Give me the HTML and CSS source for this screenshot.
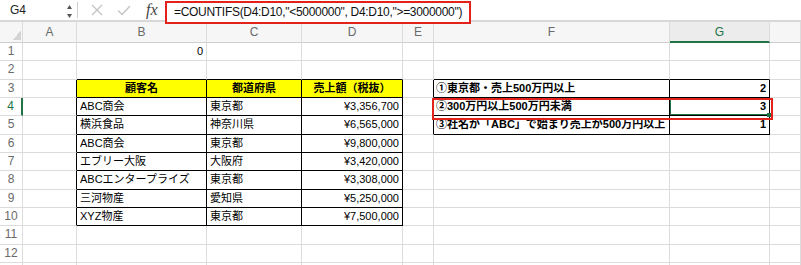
FILE: index.html
```html
<!DOCTYPE html>
<html lang="ja">
<head>
  <meta charset="UTF-8">
  <meta name="viewport" content="width=device-width, initial-scale=1.0">
  <title>COUNTIFS</title>
  <link rel="stylesheet" href="styles.css">
</head>
<body>
  <div class="formula-bar">
    <div class="name-box">G4</div>
    <div class="spin">
      <svg width="7" height="16" viewBox="0 0 7 16"><path d="M1 7 L3.5 3 L6 7 Z M1 12 L3.5 16 L6 12 Z" fill="#555"/></svg>
    </div>
    <div class="divider"></div>
    <div class="icon cancel">
      <svg width="12" height="12" viewBox="0 0 12 12"><path d="M1 1 L11 11 M11 1 L1 11" stroke="#c4c4c4" stroke-width="1.4" fill="none"/></svg>
    </div>
    <div class="icon enter">
      <svg width="14" height="11" viewBox="0 0 14 11"><path d="M1 5.5 L5 9.5 L13 1" stroke="#c4c4c4" stroke-width="1.4" fill="none"/></svg>
    </div>
    <div class="fx">fx</div>
    <div class="formula">=COUNTIFS(D4:D10,"&lt;5000000", D4:D10,"&gt;=3000000")</div>
  </div>

  <div class="sheet">
    <div class="row head">
      <div class="corner"></div>
      <div>A</div><div>B</div><div>C</div><div>D</div><div>E</div><div>F</div><div class="active">G</div><div></div>
    </div>

    <div class="row">
      <div class="rh">1</div>
      <div></div><div class="r">0</div><div></div><div></div><div></div><div></div><div></div><div></div>
    </div>
    <div class="row">
      <div class="rh">2</div>
      <div></div><div class="tt"></div><div class="tt"></div><div class="tt"></div><div></div><div class="tt"></div><div class="tt"></div><div></div>
    </div>
    <div class="row">
      <div class="rh">3</div>
      <div class="tl"></div>
      <div class="t hd">顧客名</div><div class="t hd">都道府県</div><div class="t hd">売上額（税抜）</div>
      <div class="tl"></div>
      <div class="t b">①東京都・売上500万円以上</div><div class="t b r">2</div>
      <div></div>
    </div>
    <div class="row">
      <div class="rh cur">4</div>
      <div class="tl"></div>
      <div class="t">ABC商会</div><div class="t">東京都</div><div class="t r">¥3,356,700</div>
      <div class="tl"></div>
      <div class="t b">②300万円以上500万円未満</div><div class="t b r selected">3</div>
      <div></div>
    </div>
    <div class="row">
      <div class="rh">5</div>
      <div class="tl"></div>
      <div class="t">横浜食品</div><div class="t">神奈川県</div><div class="t r">¥6,565,000</div>
      <div class="tl"></div>
      <div class="t b">③社名が「ABC」で始まり売上が500万円以上</div><div class="t b r">1</div>
      <div></div>
    </div>
    <div class="row">
      <div class="rh">6</div>
      <div class="tl"></div>
      <div class="t">ABC商会</div><div class="t">東京都</div><div class="t r">¥9,800,000</div>
      <div></div><div></div><div></div><div></div>
    </div>
    <div class="row">
      <div class="rh">7</div>
      <div class="tl"></div>
      <div class="t">エブリー大阪</div><div class="t">大阪府</div><div class="t r">¥3,420,000</div>
      <div></div><div></div><div></div><div></div>
    </div>
    <div class="row">
      <div class="rh">8</div>
      <div class="tl"></div>
      <div class="t">ABCエンタープライズ</div><div class="t">東京都</div><div class="t r">¥3,308,000</div>
      <div></div><div></div><div></div><div></div>
    </div>
    <div class="row">
      <div class="rh">9</div>
      <div class="tl"></div>
      <div class="t">三河物産</div><div class="t">愛知県</div><div class="t r">¥5,250,000</div>
      <div></div><div></div><div></div><div></div>
    </div>
    <div class="row">
      <div class="rh">10</div>
      <div class="tl"></div>
      <div class="t">XYZ物産</div><div class="t">東京都</div><div class="t r">¥7,500,000</div>
      <div></div><div></div><div></div><div></div>
    </div>
    <div class="row">
      <div class="rh">11</div>
      <div></div><div></div><div></div><div></div><div></div><div></div><div></div><div></div>
    </div>
    <div class="row">
      <div class="rh">12</div>
      <div></div><div></div><div></div><div></div><div></div><div></div><div></div><div></div>
    </div>
    <div class="row tail">
      <div class="rh"></div>
      <div></div><div></div><div></div><div></div><div></div><div></div><div></div><div></div>
    </div>

    <div class="highlight"></div>
  </div>
</body>
</html>
```

FILE: styles.css
```css
body {
  margin: 0;
  width: 801px;
  height: 265px;
  overflow: hidden;
  background-color: #fff;
  font-family: "Liberation Sans", "Noto Sans CJK JP", sans-serif;
  color: #000;
}

/* formula bar */
.formula-bar {
  display: flex;
  align-items: center;
  height: 20px;
  border-bottom: 2px solid #d8d8d8;
  background-color: #fff;
}
.name-box {
  width: 53px;
  padding-left: 10px;
  font-size: 12px;
  color: #222;
}
.spin {
  width: 13px;
  display: flex;
  justify-content: center;
}
.spin svg {
  display: block;
}
.divider {
  width: 1px;
  height: 16px;
  margin-left: 1px;
  background-color: #d0d0d0;
}
.icon {
  display: flex;
  justify-content: center;
}
.icon svg {
  display: block;
}
.cancel {
  width: 37px;
}
.enter {
  width: 18px;
}
.fx {
  width: 19px;
  padding-left: 13px;
  font-family: "Liberation Serif", serif;
  font-style: italic;
  font-size: 16px;
  color: #444;
}
.formula {
  position: relative;
  z-index: 2;
  align-self: flex-start;
  box-sizing: border-box;
  width: 306px;
  height: 23px;
  margin-top: 1px;
  padding-left: 7px;
  border: 2px solid #e3231b;
  font-size: 12px;
  line-height: 19px;
  letter-spacing: -0.3px;
  white-space: nowrap;
  color: #111;
  background-color: #fff;
}

/* sheet grid */
.sheet {
  position: relative;
}
.row {
  display: grid;
  grid-template-columns: 23px 54px 130px 95px 101px 31px 236px 100px 31px;
  height: 18.34px;
}
.row > div {
  box-sizing: border-box;
  border-right: 1px solid #dcdcdc;
  border-bottom: 1px solid #dcdcdc;
  padding: 0 3px;
  font-size: 11px;
  line-height: 17px;
  white-space: nowrap;
  overflow: hidden;
}
.row.tail {
  height: 6px;
}
.row.head {
  height: 21px;
}
.row.head > div {
  background-color: #f6f6f6;
  border-bottom-color: #cfcfcf;
  text-align: center;
  font-size: 12px;
  line-height: 20px;
  color: #6a6a6a;
}
.row.head > .active {
  color: #217346;
  border-bottom: 2px solid #217346;
  background-color: #ececec;
}
.corner {
  position: relative;
}
.corner::after {
  content: "";
  position: absolute;
  right: 1px;
  bottom: 2px;
  width: 8px;
  height: 10px;
  background: linear-gradient(to bottom right, transparent 50%, #d4d4d4 50%);
}
.row > .rh {
  padding: 0;
  text-align: center;
  font-size: 12px;
  color: #6a6a6a;
}
.row > .rh.cur {
  color: #217346;
  border-right: 2px solid #217346;
}

/* cell formats */
.r {
  text-align: right;
}
.b {
  font-weight: bold;
}
.row > .tt {
  border-bottom-color: #000;
}
.row > .tl {
  border-right-color: #000;
}
.row > .t {
  border-right-color: #000;
  border-bottom-color: #000;
}
.row > .hd {
  background-color: #ffff00;
  font-weight: bold;
  text-align: center;
}
.row > .b {
  padding: 0 3px 0 2px;
}
.row > .selected {
  position: relative;
  overflow: visible;
  box-shadow: inset 1px 0 0 #217346, inset 0 -1px 0 #217346;
}
.selected::after {
  content: "";
  position: absolute;
  right: -2px;
  bottom: -2px;
  width: 4px;
  height: 4px;
  background-color: #217346;
}

/* red emphasis box over F4:G4 */
.highlight {
  position: absolute;
  left: 432px;
  top: 76px;
  width: 341px;
  height: 22px;
  box-sizing: border-box;
  border: 2px solid #e3231b;
}
```
